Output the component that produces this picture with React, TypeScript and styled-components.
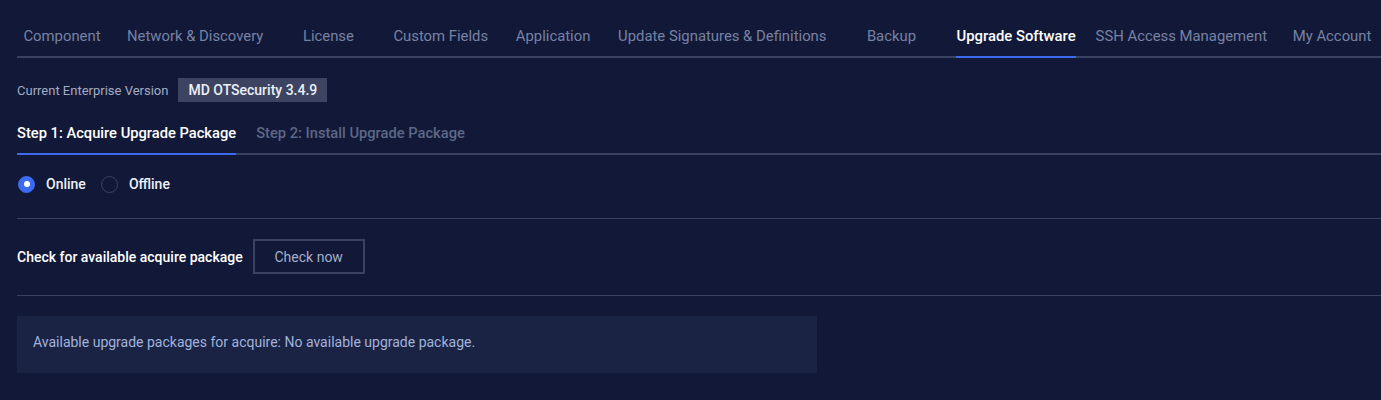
import styled, { createGlobalStyle } from "styled-components";

const GlobalStyle = createGlobalStyle`
  html, body {
    margin: 0;
    padding: 0;
    background: #121938;
  }
  body {
    font-family: Roboto, "Noto Sans", "Liberation Sans", sans-serif;
    color: #e8ebf3;
  }
`;

const mainTabs = [
  "Component",
  "Network & Discovery",
  "License",
  "Custom Fields",
  "Application",
  "Update Signatures & Definitions",
  "Backup",
  "Upgrade Software",
  "SSH Access Management",
  "My Account",
];

const App = () => {
  return (
    <>
      <GlobalStyle />
      <Page>
        <TabBar>
          {mainTabs.map((t) => (
            <Tab key={t} $active={t === "Upgrade Software"}>
              {t}
            </Tab>
          ))}
        </TabBar>

        <VersionRow>
          <VersionLabel>Current Enterprise Version</VersionLabel>
          <VersionBadge>MD OTSecurity 3.4.9</VersionBadge>
        </VersionRow>

        <StepBar>
          <StepTab $active>Step 1: Acquire Upgrade Package</StepTab>
          <StepTab>Step 2: Install Upgrade Package</StepTab>
        </StepBar>

        <RadioRow>
          <RadioOption>
            <RadioCircle $checked />
            <RadioLabel>Online</RadioLabel>
          </RadioOption>
          <RadioOption>
            <RadioCircle />
            <RadioLabel>Offline</RadioLabel>
          </RadioOption>
        </RadioRow>

        <Divider />

        <CheckRow>
          <CheckLabel>Check for available acquire package</CheckLabel>
          <OutlineButton>Check now</OutlineButton>
        </CheckRow>

        <Divider />

        <InfoBox>
          Available upgrade packages for acquire: No available upgrade package.
        </InfoBox>
      </Page>
    </>
  );
};

export default App;

const Page = styled.div`
  padding: 0 0 30px 17px;
`;

const TabBar = styled.div`
  display: flex;
  border-bottom: 2px solid #3a4262;
`;

const Tab = styled.div<{ $active?: boolean }>`
  flex-shrink: 0;
  min-width: 90px;
  margin-right: 20px;
  padding: 27px 0 11px;
  text-align: center;
  font-size: 14.85px;
  line-height: 18px;
  white-space: nowrap;
  font-weight: ${(p) => (p.$active ? 500 : 400)};
  color: ${(p) => (p.$active ? "#ffffff" : "#7782a3")};
  border-bottom: 2px solid ${(p) => (p.$active ? "#3d6bf0" : "transparent")};
  margin-bottom: -2px;
`;

const VersionRow = styled.div`
  display: flex;
  align-items: center;
  margin-top: 20px;
`;

const VersionLabel = styled.span`
  font-size: 13px;
  color: #a3abc3;
  margin-right: 10px;
`;

const VersionBadge = styled.span`
  height: 24px;
  line-height: 24px;
  padding: 0 10px;
  background: #3c4461;
  font-size: 14px;
  font-weight: 500;
  color: #eceff5;
`;

const StepBar = styled.div`
  display: flex;
  gap: 20px;
  margin-top: 12px;
  border-bottom: 2px solid #3a4262;
`;

const StepTab = styled.div<{ $active?: boolean }>`
  padding: 10px 0 11px;
  font-size: 14.7px;
  line-height: 18px;
  font-weight: 500;
  white-space: nowrap;
  color: ${(p) => (p.$active ? "#ffffff" : "#5d6787")};
  border-bottom: 2px solid ${(p) => (p.$active ? "#3d6bf0" : "transparent")};
  margin-bottom: -2px;
`;

const RadioRow = styled.div`
  display: flex;
  align-items: center;
  height: 18px;
  margin-top: 20px;
  margin-bottom: 25px;
`;

const RadioOption = styled.label`
  display: flex;
  align-items: center;
  margin-right: 14px;
  cursor: pointer;
`;

const RadioCircle = styled.span<{ $checked?: boolean }>`
  box-sizing: border-box;
  width: 17px;
  height: 17px;
  border-radius: 50%;
  margin-left: 1px;
  display: flex;
  align-items: center;
  justify-content: center;
  background: ${(p) => (p.$checked ? "#3d6bf0" : "transparent")};
  border: 1px solid ${(p) => (p.$checked ? "#3d6bf0" : "#3a4262")};
  &::after {
    content: "";
    display: ${(p) => (p.$checked ? "block" : "none")};
    width: 6px;
    height: 6px;
    border-radius: 50%;
    background: #ffffff;
  }
`;

const RadioLabel = styled.span`
  margin-left: 11px;
  font-size: 14px;
  font-weight: 500;
  color: #eef0f6;
`;

const Divider = styled.div`
  height: 1px;
  background: #3a4262;
`;

const CheckRow = styled.div`
  display: flex;
  align-items: center;
  margin: 20px 0 21px;
`;

const CheckLabel = styled.span`
  font-size: 14px;
  font-weight: 500;
  color: #ffffff;
  margin-right: 10px;
`;

const OutlineButton = styled.button`
  box-sizing: border-box;
  width: 112px;
  height: 35px;
  background: transparent;
  border: 2px solid #3a4262;
  font-family: Roboto, "Noto Sans", "Liberation Sans", sans-serif;
  font-size: 14px;
  color: #a4aec8;
  cursor: pointer;
`;

const InfoBox = styled.div`
  display: flex;
  align-items: center;
  width: 800px;
  height: 57px;
  box-sizing: border-box;
  margin-top: 20px;
  padding: 0 16px 5px;
  background: #1b2344;
  font-size: 14px;
  color: #a0b2dc;
`;
